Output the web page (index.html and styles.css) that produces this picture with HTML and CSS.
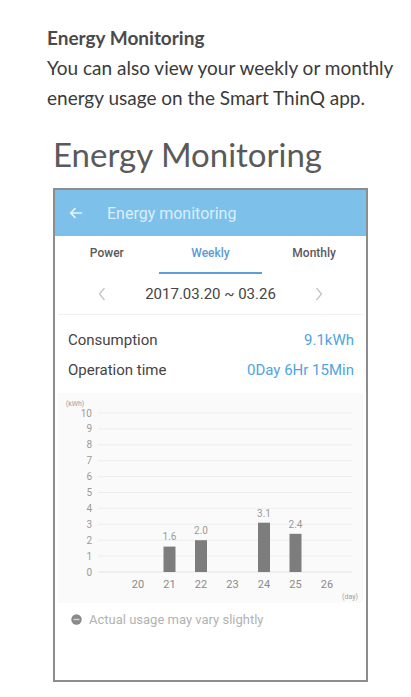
FILE: index.html
```html
<!DOCTYPE html>
<html>
<head>
<meta charset="utf-8">
<link rel="stylesheet" href="styles.css">
</head>
<body>
<section class="intro">
  <h2 class="intro-title">Energy Monitoring</h2>
  <p class="intro-text">You can also view your weekly or monthly energy usage on the Smart ThinQ app.</p>
</section>
<h1 class="big-title">Energy Monitoring</h1>
<div class="phone">
  <header class="app-bar">
    <svg class="back" width="14" height="12" viewBox="0 0 14 12"><path d="M13 6H2M6.5 1.2L1.7 6l4.8 4.8" fill="none" stroke="#e4f3fc" stroke-width="1.7"/></svg>
    <span class="app-title">Energy monitoring</span>
  </header>
  <nav class="tabs">
    <div class="tab">Power</div>
    <div class="tab active">Weekly</div>
    <div class="tab">Monthly</div>
  </nav>
  <div class="date-row">
    <svg class="chev" width="8" height="14" viewBox="0 0 8 14"><path d="M6.5 1L1.5 7l5 6" fill="none" stroke="#c4c4c4" stroke-width="1.3"/></svg>
    <div class="date">2017.03.20 ~ 03.26</div>
    <svg class="chev" width="8" height="14" viewBox="0 0 8 14"><path d="M1.5 1l5 6-5 6" fill="none" stroke="#c4c4c4" stroke-width="1.3"/></svg>
  </div>
  <div class="stats">
    <div class="stat"><span>Consumption</span><span class="val">9.1kWh</span></div>
    <div class="stat"><span>Operation time</span><span class="val">0Day 6Hr 15Min</span></div>
  </div>
  <div class="chart">
    <svg width="305" height="210" viewBox="0 0 305 210">
      <g class="grid" stroke="#ededed" stroke-width="1">
        <line x1="40" x2="294" y1="20" y2="20"/>
        <line x1="40" x2="294" y1="35.9" y2="35.9"/>
        <line x1="40" x2="294" y1="51.8" y2="51.8"/>
        <line x1="40" x2="294" y1="67.7" y2="67.7"/>
        <line x1="40" x2="294" y1="83.6" y2="83.6"/>
        <line x1="40" x2="294" y1="99.5" y2="99.5"/>
        <line x1="40" x2="294" y1="115.4" y2="115.4"/>
        <line x1="40" x2="294" y1="131.3" y2="131.3"/>
        <line x1="40" x2="294" y1="147.2" y2="147.2"/>
        <line x1="40" x2="294" y1="163.1" y2="163.1"/>
        <line x1="40" x2="294" y1="179" y2="179" stroke="#e2e2e2"/>
      </g>
      <g class="ylab" text-anchor="end">
        <text x="17" y="13" text-anchor="middle" class="unit">(kWh)</text>
        <text x="34" y="23.5">10</text>
        <text x="34" y="39.4">9</text>
        <text x="34" y="55.3">8</text>
        <text x="34" y="71.2">7</text>
        <text x="34" y="87.1">6</text>
        <text x="34" y="103">5</text>
        <text x="34" y="118.9">4</text>
        <text x="34" y="134.8">3</text>
        <text x="34" y="150.7">2</text>
        <text x="34" y="166.6">1</text>
        <text x="34" y="182.5">0</text>
      </g>
      <g fill="#7d7d7d">
        <rect x="105.5" y="153.6" width="12" height="25.4"/>
        <rect x="137" y="147.2" width="12" height="31.8"/>
        <rect x="200" y="129.7" width="12" height="49.3"/>
        <rect x="231.5" y="140.8" width="12" height="38.2"/>
      </g>
      <g class="vlab" text-anchor="middle">
        <text x="111.5" y="147">1.6</text>
        <text x="143" y="141">2.0</text>
        <text x="206" y="123.5">3.1</text>
        <text x="237.5" y="134.5">2.4</text>
      </g>
      <g class="xlab" text-anchor="middle">
        <text x="80" y="195">20</text>
        <text x="111.5" y="195">21</text>
        <text x="143" y="195">22</text>
        <text x="174.5" y="195">23</text>
        <text x="206" y="195">24</text>
        <text x="237.5" y="195">25</text>
        <text x="269" y="195">26</text>
        <text x="292" y="206" class="unit">(day)</text>
      </g>
    </svg>
  </div>
  <div class="note">
    <svg width="11" height="11" viewBox="0 0 11 11"><circle cx="5.5" cy="5.5" r="5.2" fill="#8a8a8a"/><rect x="2.6" y="4.8" width="5.8" height="1.4" fill="#d8d8d8"/></svg>
    <span>Actual usage may vary slightly</span>
  </div>
</div>
</body>
</html>
```
FILE: styles.css
```css
* { box-sizing: border-box; }
body {
  margin: 0;
  background: #fff;
  font-family: Lato, "Open Sans", sans-serif;
  color: #3c3c3c;
}
.intro { padding: 23px 0 0 47px; }
.intro-title {
  margin: 0;
  font-size: 19px;
  line-height: 30px;
  font-weight: 700;
  color: #4a4a4a;
}
.intro-text {
  margin: 0;
  font-size: 19px;
  line-height: 30px;
  color: #3a3a3a;
}
.big-title {
  margin: 21px 0 0 53px;
  font-size: 33px;
  line-height: 40px;
  font-weight: 400;
  color: #5a5a5a;
}
.phone {
  margin: 14px 0 0 53px;
  width: 315px;
  height: 494px;
  border: 2px solid #8d8d8d;
  font-family: Roboto, "Noto Sans", sans-serif;
  background: #fff;
}
.app-bar {
  height: 46px;
  background: #7dc0ea;
  display: flex;
  align-items: center;
  padding-left: 14px;
  gap: 24px;
}
.app-title {
  font-size: 16px;
  color: #d9effb;
}
.tabs {
  display: grid;
  grid-template-columns: repeat(3, 1fr);
  height: 38px;
}
.tab {
  display: flex;
  align-items: center;
  justify-content: center;
  font-size: 12px;
  color: #5a5a5a;
  font-weight: 500;
  padding-bottom: 4px;
}
.tab.active {
  color: #5b9ad6;
  border-bottom: 2px solid #5d9fd4;
  padding-bottom: 2px;
}
.date-row {
  display: grid;
  grid-template-columns: repeat(3, 1fr);
  align-items: center;
  justify-items: center;
  height: 41px;
  border-bottom: 1px solid #f0f0f0;
  margin: 0 3px;
}
.date {
  font-size: 15px;
  color: #444;
  white-space: nowrap;
}
.stats { padding: 10px 12px 0 13px; }
.stat {
  display: flex;
  justify-content: space-between;
  align-items: center;
  height: 30px;
  font-size: 15px;
  color: #444;
}
.val { color: #4fa4e0; }
.chart {
  margin: 8px 3px 0 3px;
  height: 210px;
  background: #fafafa;
}
.chart svg { display: block; }
.ylab text { font-size: 10px; fill: #9a9a9a; }
.ylab .unit { font-size: 7px; }
.vlab text { font-size: 10px; fill: #9a9a9a; }
.xlab text { font-size: 11px; fill: #8a8a8a; }
.xlab .unit { font-size: 7px; fill: #a0a0a0; }
.note {
  display: flex;
  align-items: center;
  gap: 7px;
  padding: 9px 0 0 16px;
  font-size: 13px;
  color: #b2b2b2;
}
```
